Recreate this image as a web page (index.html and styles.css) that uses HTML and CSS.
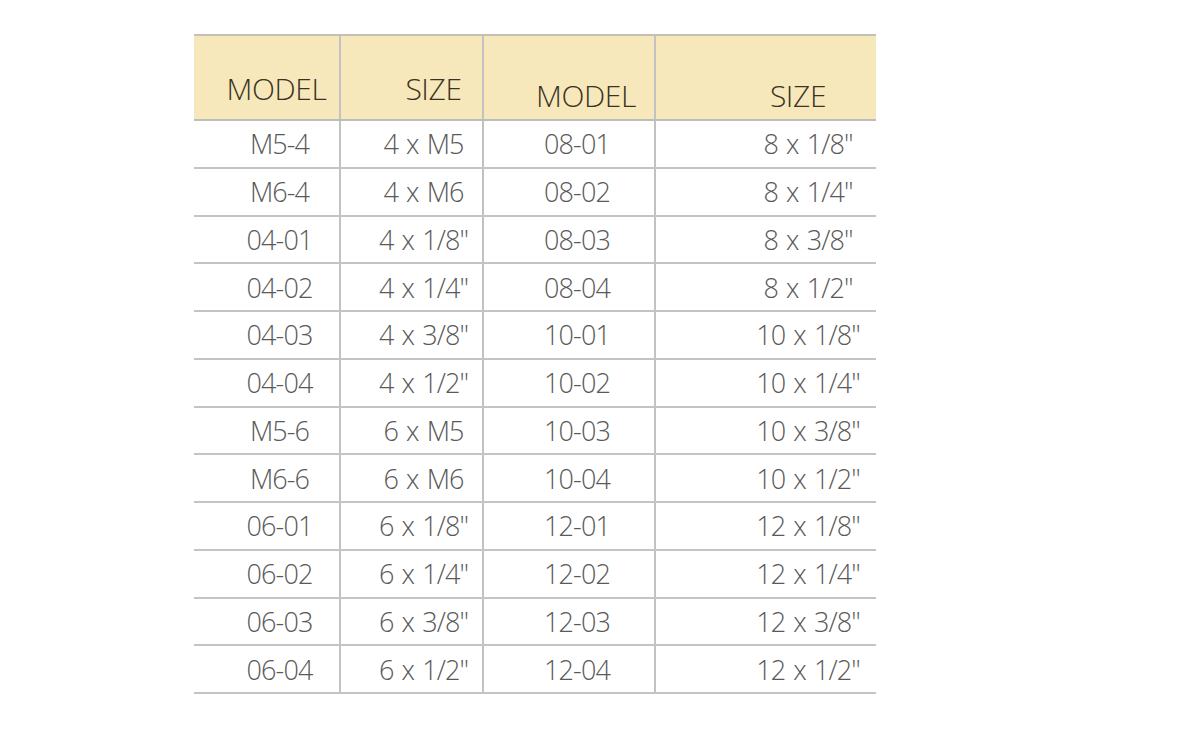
FILE: index.html
```html
<!DOCTYPE html>
<html>
<head>
<meta charset="utf-8">
<link rel="stylesheet" href="styles.css">
</head>
<body>
<div class="page">
<table class="spec">
<colgroup>
<col class="c1"><col class="c2"><col class="c3"><col class="c4">
</colgroup>
<thead>
<tr>
<th class="h1">MODEL</th>
<th class="h2">SIZE</th>
<th class="h3">MODEL</th>
<th class="h4">SIZE</th>
</tr>
</thead>
<tbody>
<tr><td class="d1">M5-4</td><td class="d2">4 x M5</td><td class="d3">08-01</td><td class="d4">8 x 1/8"</td></tr>
<tr><td class="d1">M6-4</td><td class="d2">4 x M6</td><td class="d3">08-02</td><td class="d4">8 x 1/4"</td></tr>
<tr><td class="d1">04-01</td><td class="d2">4 x 1/8"</td><td class="d3">08-03</td><td class="d4">8 x 3/8"</td></tr>
<tr><td class="d1">04-02</td><td class="d2">4 x 1/4"</td><td class="d3">08-04</td><td class="d4">8 x 1/2"</td></tr>
<tr><td class="d1">04-03</td><td class="d2">4 x 3/8"</td><td class="d3">10-01</td><td class="d4">10 x 1/8"</td></tr>
<tr><td class="d1">04-04</td><td class="d2">4 x 1/2"</td><td class="d3">10-02</td><td class="d4">10 x 1/4"</td></tr>
<tr><td class="d1">M5-6</td><td class="d2">6 x M5</td><td class="d3">10-03</td><td class="d4">10 x 3/8"</td></tr>
<tr><td class="d1">M6-6</td><td class="d2">6 x M6</td><td class="d3">10-04</td><td class="d4">10 x 1/2"</td></tr>
<tr><td class="d1">06-01</td><td class="d2">6 x 1/8"</td><td class="d3">12-01</td><td class="d4">12 x 1/8"</td></tr>
<tr><td class="d1">06-02</td><td class="d2">6 x 1/4"</td><td class="d3">12-02</td><td class="d4">12 x 1/4"</td></tr>
<tr><td class="d1">06-03</td><td class="d2">6 x 3/8"</td><td class="d3">12-03</td><td class="d4">12 x 3/8"</td></tr>
<tr><td class="d1">06-04</td><td class="d2">6 x 1/2"</td><td class="d3">12-04</td><td class="d4">12 x 1/2"</td></tr>
</tbody>
</table>
</div>
</body>
</html>
```
FILE: styles.css
```css
html, body {
  margin: 0;
  padding: 0;
  background: #ffffff;
}
.page {
  padding: 34px 0 0 194px;
}
.spec {
  border-collapse: collapse;
  table-layout: fixed;
  width: 682px;
  font-family: "Open Sans", "Noto Sans", sans-serif;
  font-weight: 300;
  letter-spacing: -0.9px;
  word-spacing: 2px;
}
.c1 { width: 146px; }
.c2 { width: 143px; }
.c3 { width: 172px; }
.c4 { width: 221px; }

.spec th {
  background: #f7e8bc;
  border-top: 2px solid #c4c0b6;
  border-bottom: 2px solid #bdbdbd;
  vertical-align: bottom;
  font-weight: 300;
  font-size: 30px;
  color: #3b3322;
  padding: 0;
  line-height: 1;
  text-align: center;
  letter-spacing: -0.4px;
}
.spec th + th, .spec td + td {
  border-left: 2px solid #c2c2c2;
}
.h1 { height: 68px; padding-left: 20px !important; padding-bottom: 15px !important; }
.h2 { height: 68px; padding-left: 44px !important; padding-bottom: 15px !important; }
.h3 { height: 75px; padding-left: 34px !important; padding-bottom: 8px !important; }
.h4 { height: 75px; padding-left: 64px !important; padding-bottom: 8px !important; }

.spec td {
  height: 45.75px;
  border-bottom: 2px solid #c4c4c4;
  font-size: 27px;
  color: #595959;
  padding: 0;
  line-height: 1;
  text-align: center;
  vertical-align: middle;
}
.d1 { padding-left: 26px !important; }
.d2 { padding-left: 24px !important; }
.d3 { padding-left: 16px !important; }
.d4 { padding-left: 84px !important; }
```
